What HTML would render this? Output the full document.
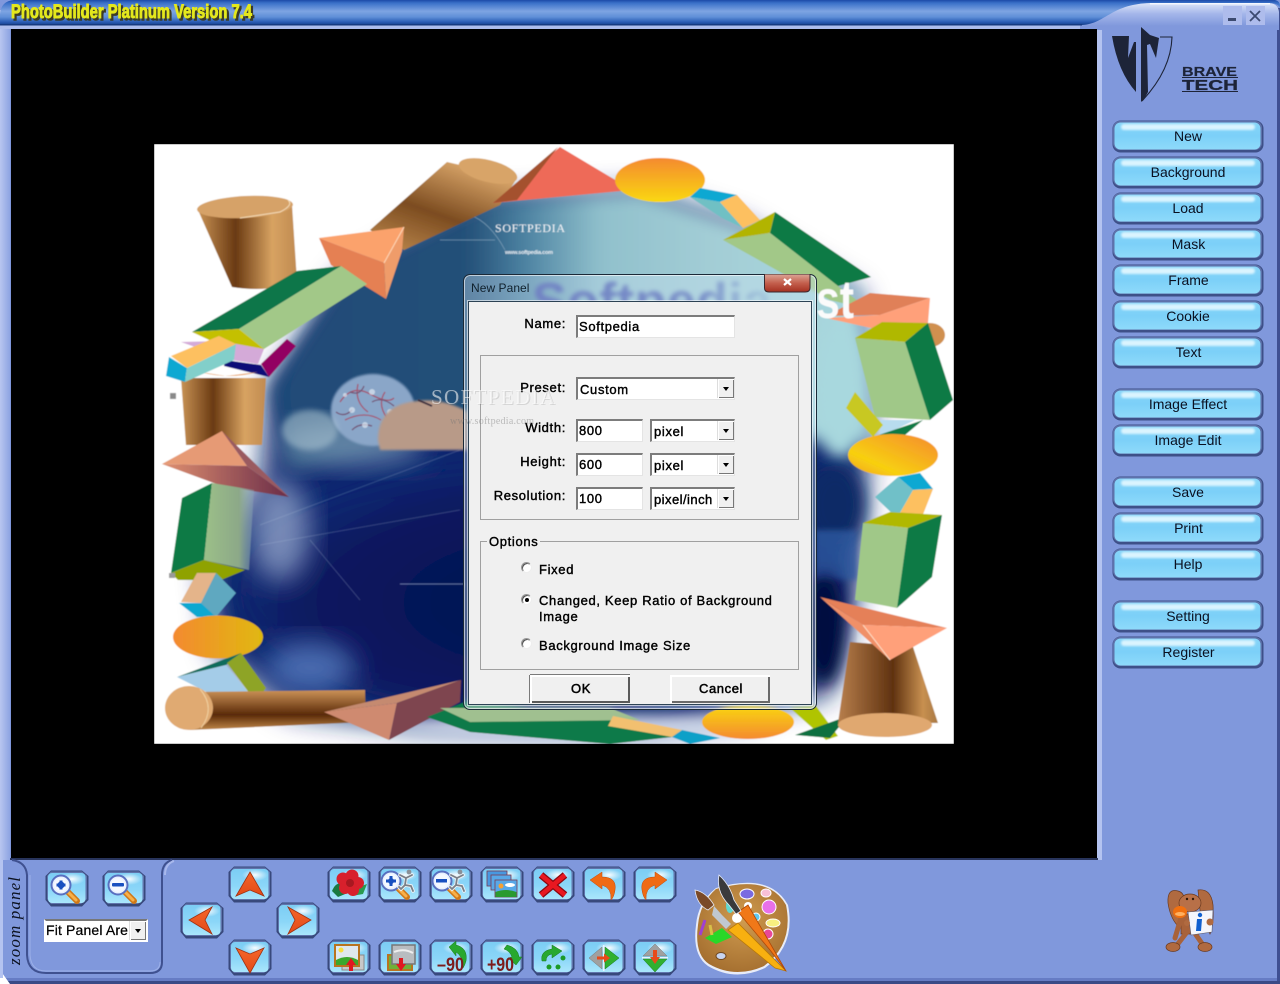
<!DOCTYPE html>
<html><head><meta charset="utf-8"><title>PhotoBuilder Platinum</title>
<style>
html,body{margin:0;padding:0;width:1280px;height:984px;overflow:hidden;background:#8098dc}
svg.page{position:absolute;left:0;top:0}
.glass{position:absolute;left:463px;top:274px;width:352px;height:434px;border:1px solid #1b2a38;border-radius:7px;background:rgba(205,228,244,.36);backdrop-filter:blur(2px);box-shadow:inset 0 0 0 1px rgba(255,255,255,.6)}
.client{position:absolute;left:469px;top:302px;width:342px;height:402px;background:#f0f0f0;box-shadow:0 0 0 1px #2c4254,0 0 0 2px rgba(255,255,255,.6)}
.t{position:absolute;font:13px/16px "Liberation Sans",sans-serif;color:#000;letter-spacing:.66px;-webkit-text-stroke:.4px #000;white-space:nowrap}
.r{text-align:right;width:110px;left:456px}
.i{position:absolute;box-sizing:border-box;background:#fff;border-top:2px solid #7c7c7c;border-left:2px solid #7c7c7c;border-right:1px solid #e4e4e4;border-bottom:1px solid #e4e4e4;font:13px/19px "Liberation Sans",sans-serif;letter-spacing:.66px;-webkit-text-stroke:.4px #000;padding-left:1px;white-space:nowrap;overflow:hidden;color:#000}
.c{padding-left:2px;line-height:21px}
.c b{position:absolute;right:0;top:0;width:16px;height:19px;background:#f0f0f0;border-left:1px solid #fff;border-top:1px solid #fff;box-sizing:border-box;box-shadow:inset -1px -1px 0 #777,-1px 0 0 #ddd}
.c b:after{content:"";position:absolute;left:4px;top:7px;border:3.5px solid transparent;border-top:4px solid #000;border-bottom:0}
.g{position:absolute;box-sizing:border-box;border:1px solid #a0a0a0}
.rd{position:absolute;width:11px;height:11px;border-radius:50%;background:#fff;box-sizing:border-box;border:1px solid #9a9a9a;border-right-color:#eee;border-bottom-color:#eee;box-shadow:inset 1px 1px 0 #555}
.rd i{position:absolute;left:3px;top:3px;width:4px;height:4px;border-radius:50%;background:#000}
.btn{position:absolute;box-sizing:border-box;height:28px;width:100px;top:675px;background:#f0f0f0;border-top:2px solid #fff;border-left:2px solid #fff;box-shadow:inset -2px -2px 0 #6a6a6a;text-align:center;font:13px/23px "Liberation Sans",sans-serif;letter-spacing:.6px;-webkit-text-stroke:.5px #000;color:#000}
</style></head>
<body>
<svg class="page" width="1280" height="984" viewBox="0 0 1280 984" xmlns="http://www.w3.org/2000/svg">
<defs>
<filter id="f05" x="0" y="0" width="100%" height="100%"><feGaussianBlur stdDeviation=".6"/></filter>
<filter id="f1" x="-20%" y="-20%" width="140%" height="140%"><feGaussianBlur stdDeviation="1"/></filter>
<filter id="f3" x="-30%" y="-30%" width="160%" height="160%"><feGaussianBlur stdDeviation="3"/></filter>
<filter id="f8" x="-30%" y="-30%" width="160%" height="160%"><feGaussianBlur stdDeviation="8"/></filter>
<filter id="f14" x="-30%" y="-30%" width="160%" height="160%"><feGaussianBlur stdDeviation="14"/></filter>
<clipPath id="ic"><rect x="154" y="144" width="800" height="600"/></clipPath>
<linearGradient id="tb" x1="0" y1="0" x2="0" y2="1"><stop offset="0" stop-color="#1c4aa8"/><stop offset=".12" stop-color="#3a70c8"/><stop offset=".45" stop-color="#7ea4e2"/><stop offset=".68" stop-color="#5f8fd8"/><stop offset=".88" stop-color="#2a5cb4"/><stop offset="1" stop-color="#16408c"/></linearGradient>
<linearGradient id="rp" x1="0" y1="0" x2="0" y2="1"><stop offset="0" stop-color="#dde5f8"/><stop offset=".4" stop-color="#a4b6ea"/><stop offset=".85" stop-color="#8098dc"/></linearGradient>
<linearGradient id="lb" x1="0" y1="0" x2="1" y2="0"><stop offset="0" stop-color="#b8c6f0"/><stop offset="1" stop-color="#8ea4e2"/></linearGradient>
<linearGradient id="bg" x1="0" y1="0" x2="0" y2="1"><stop offset="0" stop-color="#86d4f8"/><stop offset=".5" stop-color="#7cd0f8"/><stop offset="1" stop-color="#8edafa"/></linearGradient>
<linearGradient id="ibg" x1="0" y1="0" x2="0" y2="1"><stop offset="0" stop-color="#7ccdf4"/><stop offset=".55" stop-color="#8bd6f8"/><stop offset="1" stop-color="#aae6fc"/></linearGradient>
<linearGradient id="cyl" x1="0" y1="0" x2="1" y2="0"><stop offset="0" stop-color="#c99355"/><stop offset=".38" stop-color="#6a3a12"/><stop offset=".75" stop-color="#d8a362"/><stop offset="1" stop-color="#c08a50"/></linearGradient>
<linearGradient id="cyl2" x1="0" y1="0" x2="1" y2="0"><stop offset="0" stop-color="#b87f4c"/><stop offset=".55" stop-color="#5f3210"/><stop offset=".85" stop-color="#c89050"/><stop offset="1" stop-color="#a87842"/></linearGradient>
<linearGradient id="cylt" x1="0" y1="1" x2=".6" y2="0"><stop offset="0" stop-color="#c08c50"/><stop offset=".5" stop-color="#7c4c20"/><stop offset="1" stop-color="#d8a468"/></linearGradient>
<linearGradient id="logg" x1="0" y1="0" x2="0" y2="1"><stop offset="0" stop-color="#cc9358"/><stop offset=".62" stop-color="#5a2a08"/><stop offset="1" stop-color="#c08848"/></linearGradient>
<linearGradient id="ory" x1="0" y1="0" x2="1" y2="0"><stop offset="0" stop-color="#f48a30"/><stop offset="1" stop-color="#e0b810"/></linearGradient>
<linearGradient id="oty" x1="0" y1="0" x2="0" y2="1"><stop offset="0" stop-color="#f48a30"/><stop offset="1" stop-color="#fad810"/></linearGradient>
<linearGradient id="oyl" x1="1" y1="0" x2="0" y2="1"><stop offset="0" stop-color="#f48a30"/><stop offset=".7" stop-color="#f8d010"/><stop offset="1" stop-color="#f0a020"/></linearGradient>
<linearGradient id="top" x1="0" y1="0" x2="1" y2="0"><stop offset="0" stop-color="#1f4a78"/><stop offset=".33" stop-color="#245078"/><stop offset=".42" stop-color="#4a80a0"/><stop offset=".55" stop-color="#90c0cc"/><stop offset=".75" stop-color="#a4ced6"/><stop offset="1" stop-color="#a8d8e0"/></linearGradient>
<linearGradient id="gfade" x1="0" y1="0" x2="1" y2="0"><stop offset="0" stop-color="#9cc088"/><stop offset=".7" stop-color="#8ca888"/><stop offset="1" stop-color="#8ca8b8" stop-opacity=".4"/></linearGradient>
<linearGradient id="prD" x1="0" y1="0" x2="1" y2="0"><stop offset="0" stop-color="#e09070"/><stop offset="1" stop-color="#6a2c48"/></linearGradient>
<linearGradient id="arr" x1="0" y1="0" x2="0" y2="1"><stop offset="0" stop-color="#f5662a"/><stop offset="1" stop-color="#e24a18"/></linearGradient>
<linearGradient id="sof" x1="0" y1="0" x2="1" y2="0"><stop offset="0" stop-color="#3c4aa8"/><stop offset=".7" stop-color="#4a60b0"/><stop offset="1" stop-color="#6a90c0" stop-opacity=".3"/></linearGradient>
<radialGradient id="hl" cx=".5" cy=".5" r=".5"><stop offset="0" stop-color="#fff" stop-opacity=".95"/><stop offset="1" stop-color="#fff" stop-opacity="0"/></radialGradient>
<radialGradient id="nav" cx=".55" cy=".55" r=".62"><stop offset="0" stop-color="#04104e"/><stop offset=".72" stop-color="#081a60"/><stop offset="1" stop-color="#14307e"/></radialGradient>
<radialGradient id="wood" cx=".5" cy=".4" r=".7"><stop offset="0" stop-color="#d09c50"/><stop offset="1" stop-color="#a06a2c"/></radialGradient>
<symbol id="mb" width="152" height="33" viewBox="0 0 152 33">
<rect x=".5" y=".5" width="151" height="32" rx="8" fill="#3e5088"/>
<rect x="1" y="1" width="149" height="29" rx="7" fill="#5e72aa"/>
<rect x="2.5" y="2.5" width="146" height="27" rx="6" fill="url(#bg)"/>
<rect x="9" y="4" width="134" height="6" rx="3" fill="#e4f8ff" opacity=".9" filter="url(#f1)"/>
</symbol>
<symbol id="ib" width="44" height="37" viewBox="0 0 44 37">
<path d="M6 .5H37L43.5 6V30L37 36.5H6L.5 30V6Z" fill="#38497c"/>
<path d="M6 1.5H37L42 6V29L36 34H6L2 29V6Z" fill="#6074ac"/>
<rect x="3" y="3" width="37.5" height="30" rx="4" fill="url(#ibg)"/>
<ellipse cx="27" cy="9" rx="13" ry="6" fill="url(#hl)"/>
</symbol>
<symbol id="mag" width="44" height="37" viewBox="0 0 44 37">
<path d="M22 21L32 31" stroke="#d07818" stroke-width="6" stroke-linecap="round"/><path d="M22 21L31 30" stroke="#f8b048" stroke-width="3" stroke-linecap="round"/>
<circle cx="16" cy="15" r="9.5" fill="#e8f0ff" stroke="#5870c0" stroke-width="2"/><circle cx="16" cy="15" r="7" fill="#f4f8ff"/>
</symbol>
<symbol id="run" width="44" height="37" viewBox="0 0 44 37">
<path d="M22 9L28 12 34 9M28 12L27 19 33 20 35 25M27 19L23 23 21 21" fill="none" stroke="#eef2f6" stroke-width="3.6" stroke-linecap="round"/>
<path d="M22 9L28 12 34 9M28 12L27 19 33 20 35 25M27 19L23 23 21 21" fill="none" stroke="#7a8088" stroke-width="1.8" stroke-linecap="round"/>
<circle cx="31" cy="6" r="2.4" fill="#8a9098"/>
</symbol>
</defs>

<!-- window base -->
<path d="M12 0H1268Q1280 0 1280 12V984H8L0 976V12Q0 0 12 0Z" fill="#8098dc"/>
<rect x="0" y="10" width="10" height="850" fill="url(#lb)"/>
<rect x="0" y="24" width="1100" height="5" fill="#aebdec"/>
<rect x="1097" y="24" width="5" height="836" fill="#b4c3f0"/>
<rect x="1277" y="8" width="3" height="976" fill="#3f5092"/>
<rect x="6" y="981" width="1274" height="3" fill="#3a4a86"/>
<rect x="3" y="978" width="1274" height="3" fill="#667cc4"/>
<path d="M0 970L10 984H0Z" fill="#fff"/>
<rect x="0" y="860" width="3" height="118" fill="#b4c3f0"/>
<!-- right panel head -->
<path d="M1080 25C1105 25 1105 4 1150 3H1268Q1278 3 1279 12V30H1080Z" fill="url(#rp)"/>
<!-- title bar -->
<path d="M0 25V14Q1 1 14 0H1275Q1280 1 1280 6V8Q1278 3 1268 3H1150C1110 4 1105 25 1080 25Z" fill="url(#tb)"/>
<rect x="0" y="24" width="1082" height="1.5" fill="#163a80"/>
<rect x="1150" y="3" width="120" height="1.5" fill="#f4f7ff"/>
<g font-family="Liberation Sans, sans-serif" font-weight="bold" font-size="19">
<text x="13" y="20" textLength="241" lengthAdjust="spacingAndGlyphs" fill="#3c3c28" stroke="#3c3c28" stroke-width="1.4">PhotoBuilder Platinum Version 7.4</text>
<text x="11" y="18" textLength="241" lengthAdjust="spacingAndGlyphs" fill="#e4e81c" stroke="#e4e81c" stroke-width=".9">PhotoBuilder Platinum Version 7.4</text>
</g>
<!-- min / close -->
<rect x="1223" y="6" width="19" height="19" fill="#aebcec"/><rect x="1228" y="18" width="8" height="3" fill="#3c4a70"/>
<rect x="1246" y="6" width="19" height="19" fill="#aebcec"/><path d="M1250 11L1260 21M1260 11L1250 21" stroke="#3c4a70" stroke-width="1.8"/>

<!-- black canvas -->
<rect x="11" y="29" width="1086" height="829" fill="#000"/>
<rect x="10" y="858" width="1088" height="2" fill="#28345c"/>

<!-- picture -->
<g clip-path="url(#ic)"><g filter="url(#f05)">
<rect x="154" y="144" width="800" height="600" fill="#fff"/>
<path d="M205 560L262 480 270 385 345 275 490 200 640 192 740 225 860 295 870 420 855 600 830 695 650 732 420 728 290 712 215 650Z" fill="#10286e" filter="url(#f14)"/>
<path d="M270 390L345 275 490 200 640 192 740 225 860 295 870 440 830 440 600 420 400 440 290 470Z" fill="url(#top)" filter="url(#f8)"/>
<ellipse cx="540" cy="590" rx="300" ry="125" fill="url(#nav)" filter="url(#f14)"/>
<ellipse cx="280" cy="530" rx="30" ry="52" fill="#8a9cc4" opacity=".85" filter="url(#f14)"/>
<ellipse cx="350" cy="445" rx="75" ry="22" fill="#7c9cb8" opacity=".75" filter="url(#f14)"/>
<ellipse cx="310" cy="668" rx="45" ry="26" fill="#4a6cb0" filter="url(#f14)"/>
<ellipse cx="580" cy="728" rx="190" ry="13" fill="#cfd8ea" filter="url(#f8)"/>
<ellipse cx="840" cy="390" rx="26" ry="70" fill="#a8d8de" filter="url(#f8)"/>
<ellipse cx="835" cy="505" rx="30" ry="40" fill="#0c2a66" filter="url(#f8)"/>
<rect x="815" y="530" width="42" height="50" fill="#2f5aa0" opacity=".8" filter="url(#f3)"/>
<ellipse cx="825" cy="630" rx="20" ry="55" fill="#051040" filter="url(#f8)"/>
<path d="M260 525L460 450M260 545L460 510M310 540L360 600" stroke="#b8c8e0" stroke-width="1" opacity=".22" fill="none"/>
<path d="M400 584H465" stroke="#8a9cc8" stroke-width="1" opacity=".6"/>
<!-- paisley ball -->
<ellipse cx="373" cy="410" rx="42" ry="36" fill="#8aa6c8" filter="url(#f1)"/>
<g stroke="#a84860" stroke-width="1.3" fill="none" opacity=".85"><path d="M340 402q12-18 30-8t24 4M345 420q20-10 36 0M358 384q-4 18 10 28M385 392q-8 12 2 26"/><path d="M336 412q8 6 16-2M350 392q10 4 14-6M372 402q10-6 22 4M352 430q8-8 20-4" stroke="#704868"/></g>
<g fill="#dfe8f2" opacity=".7"><circle cx="352" cy="410" r="3"/><circle cx="372" cy="392" r="3"/><circle cx="390" cy="412" r="3"/><circle cx="365" cy="425" r="3"/><circle cx="345" cy="395" r="2"/></g>
<path d="M378 440Q378 408 410 402Q440 396 468 412V450H380Z" fill="#b89a88" filter="url(#f1)"/>
<path d="M418 400L432 406" stroke="#403040" stroke-width="2"/>
<ellipse cx="310" cy="430" rx="28" ry="20" fill="#b6ced8" opacity=".5" filter="url(#f3)"/>
<text x="495" y="232" font-family="Liberation Serif, serif" font-size="12" fill="#f0f4f8" textLength="70">SOFTPEDIA</text>
<text x="505" y="254" font-family="Liberation Sans, sans-serif" font-size="5.5" font-weight="bold" fill="#e8eef4" textLength="48">www.softpedia.com</text>
<path d="M440 240H495M470 215Q490 222 505 250" stroke="#a0bcd0" stroke-width=".7" fill="none" opacity=".6"/>
<text x="532" y="319" font-family="Liberation Sans, sans-serif" font-size="52" font-weight="bold" fill="url(#sof)" textLength="240">Softpedia</text>
<!-- TL cylinder -->
<path d="M198 210L292 205 297 281Q270 293 232 287Z" fill="url(#cyl)"/>
<ellipse cx="245" cy="207" rx="48" ry="11" fill="#d6a268" transform="rotate(-3 245 207)"/>
<path d="M288 200Q294 205 280 212L240 218" stroke="#f4dcb8" fill="none" stroke-width="1"/>
<!-- upper log -->
<path d="M370 230L447 162 517 178 500 205 404 250Z" fill="url(#cylt)"/>
<ellipse cx="488" cy="171" rx="30" ry="11" fill="#d8a468" transform="rotate(14 488 171)"/>
<!-- red triangle -->
<path d="M493 203L560 147 632 190Z" fill="#ee6a58"/><path d="M493 203L558 147 517 200Z" fill="#a4512e"/>
<!-- pyramid TL -->
<path d="M319 238L404 227 384 263Z" fill="#fba26c"/><path d="M319 238L384 263 386 299 331 265Z" fill="#e58052"/><path d="M404 227L384 263 386 299 402 251Z" fill="#ef9c6a"/>
<path d="M404 227L384 263" stroke="#ffd8b8" stroke-width="1"/>
<!-- green bar TL -->
<path d="M192 332L297 271 341 266 239 329Z" fill="#08764a"/><path d="M239 329L341 266 367 284 264 349Z" fill="#a2c888"/><path d="M192 332L239 329 264 349 222 346Z" fill="#c4c000"/>
<!-- pink & maroon -->
<path d="M181 342L220 341 264 349 258 364 232 360Z" fill="#d4aad8"/><path d="M261 364L287 339 296 346 269 377Z" fill="#920062"/><path d="M225 360L261 365 269 377 224 366Z" fill="#0a0a78"/>
<!-- cylinder 2 -->
<path d="M181 378H266L262 445 186 445Z" fill="url(#cyl)"/><path d="M200 372Q230 380 258 372L226 376Z" fill="#e8a060"/>
<!-- small box -->
<path d="M169 357L187 368 185 382 166 376Z" fill="#10a8d2"/><path d="M187 368L236 344 234 360 185 382Z" fill="#82cfca"/><path d="M171 356L219 336 236 344 187 368Z" fill="#fdc060"/>
<rect x="170" y="393" width="6" height="6" fill="#8a8a8a"/>
<!-- salmon pyramid L -->
<path d="M162 464L222 431 247 466Z" fill="#e69a74"/><path d="M162 464L247 466 289 497 222 486Z" fill="url(#prD)"/><path d="M222 431L247 466 289 497Z" fill="#9a5a60"/>
<!-- box L -->
<path d="M182 498L212 483 204 560 171 573Z" fill="#087a44"/><path d="M212 483L254 490 249 570 204 560Z" fill="url(#gfade)"/><path d="M171 573L204 560 245 570 221 580 178 580Z" fill="#8fa200"/>
<rect x="169" y="573" width="6" height="5" fill="#999"/>
<path d="M181 602L197 573 216 573 201 603Z" fill="#e4b48a"/><path d="M216 573L236 593 216 617 201 603Z" fill="#5fa8c0"/><path d="M179 603L201 603 216 617 197 617Z" fill="#10a8d0"/>
<ellipse cx="218" cy="637" rx="45" ry="21.5" fill="url(#ory)"/>
<path d="M177 677L241 653 226 665Z" fill="#0c6c5c"/><path d="M177 677L226 665 256 702 232 705Z" fill="#a4cce8"/><path d="M227 663L241 653 266 688 256 702Z" fill="#8ea428"/>
<!-- log bottom -->
<path d="M190 692L365 690 366 722 190 730Z" fill="url(#logg)"/>
<ellipse cx="189" cy="708" rx="24" ry="22" fill="#e0aa72"/>
<path d="M200 689Q216 708 201 728" stroke="#f0d0a0" fill="none" stroke-width="1"/>
<!-- bottom pyramid -->
<path d="M324 712L461 680 397 703Z" fill="#c58a70"/><path d="M324 712L397 703 389 740Z" fill="#cf8a70"/><path d="M397 703L461 680 460 702 389 740Z" fill="#7e4450"/>
<path d="M427 717L470 700 620 720 690 735 610 744 470 732Z" fill="#0a7a48"/>
<path d="M440 708H610L640 720 470 722Z" fill="#a0c090"/>
<path d="M613 716L682 730 672 737 608 726Z" fill="#f2c070"/>
<path d="M682 730L720 738 690 744 672 737Z" fill="#10a0c8"/>
<ellipse cx="748" cy="722" rx="46" ry="17" fill="url(#oty)" transform="rotate(180 748 722)"/>
<path d="M790 708L816 706 838 736 826 740Z" fill="#b0c400"/><path d="M795 735L848 716 830 738Z" fill="#0a7040"/>
<!-- top small box -->
<ellipse cx="660" cy="180" rx="45" ry="22" fill="url(#oty)"/>
<path d="M700 188L737 195 720 202 690 197Z" fill="#10a8d2"/><path d="M690 197L720 202 743 228 722 218Z" fill="#70c0c4"/><path d="M720 202L737 195 760 220 743 228Z" fill="#fdc060"/>
<!-- right green bar -->
<path d="M723 240L775 212 770 233Z" fill="#b2b400"/><path d="M775 212L871 277 838 286 770 233Z" fill="#087a44"/><path d="M723 240L770 233 838 286 870 310 830 300Z" fill="#a2c888"/>
<!-- right shapes -->
<ellipse cx="930" cy="335" rx="15" ry="12" fill="#d09050"/>
<path d="M826 316L870 293 930 298 880 315Z" fill="#e08058"/><path d="M930 298L928 323 880 330 826 318 880 315Z" fill="#ffa07a"/>
<text x="816" y="318" font-family="Liberation Sans, sans-serif" font-size="54" font-weight="bold" fill="#fbfbfb" textLength="38" lengthAdjust="spacingAndGlyphs">st</text>
<path d="M855 338L905 342 930 420 875 417Z" fill="#a0c888"/><path d="M855 338L882 322 928 323 905 342Z" fill="#b0b800"/><path d="M905 342L928 323 953 400 930 420Z" fill="#087a44"/>
<path d="M880 420L915 420 880 437Z" fill="#b8dcee"/>
<path d="M855 392L883 425 873 437 846 408Z" fill="#c8c820"/><path d="M873 437L923 420 905 435Z" fill="#0a7a44"/>
<ellipse cx="893" cy="455" rx="45" ry="21" fill="url(#oyl)"/>
<path d="M898 477L920 473 933 489 913 490Z" fill="#10a8d2"/><path d="M913 490L933 489 922 517 897 518Z" fill="#fdc060"/><path d="M875 497L898 477 913 490 897 518Z" fill="#70c0c8"/>
<path d="M863 523L908 528 897 608 855 600Z" fill="#a0c888"/><path d="M863 523L890 512 942 515 908 528Z" fill="#b0b800"/><path d="M908 528L942 515 932 577 897 608Z" fill="#087a44"/>
<path d="M850 642L913 647 938 723 838 723Z" fill="url(#cyl2)"/>
<ellipse cx="885" cy="725" rx="47" ry="12" fill="#e0a870"/>
<path d="M820 597L947 628 863 625Z" fill="#e58058"/><path d="M863 625L947 628 890 660Z" fill="#ffa07a"/><path d="M820 597L863 625 890 660Z" fill="#f09068"/>
<path d="M863 625L890 660" stroke="#ffe0c8" stroke-width="1"/>
</g></g>

<!-- logo -->
<g fill="#1d2438">
<path d="M1112 36L1129 36 1128 58 1134 42 1136 42V92Q1118 72 1112 36Z"/>
<path d="M1141 27V102L1144 99 1148 92 1147 45 1150 44 1156 58 1159 38 1150 35Z"/>
</g>
<path d="M1160 37H1172Q1171 70 1142 101" fill="none" stroke="#1d2438" stroke-width="1.1"/>
<g font-family="Liberation Sans, sans-serif" font-weight="bold" fill="#1d2438">
<text x="1182" y="76" font-size="12.500" textLength="55" lengthAdjust="spacingAndGlyphs" stroke="#1d2438" stroke-width=".2">BRAVE</text>
<text x="1182" y="90" font-size="14.500" textLength="56" lengthAdjust="spacingAndGlyphs" stroke="#1d2438" stroke-width=".3">TECH</text>
</g>
<rect x="1182" y="77" width="56" height="1" fill="#1d2438"/><rect x="1182" y="91" width="56" height="1" fill="#1d2438"/>

<!-- right buttons -->
<use href="#mb" x="1112" y="120"/><use href="#mb" x="1112" y="156"/><use href="#mb" x="1112" y="192"/><use href="#mb" x="1112" y="228"/><use href="#mb" x="1112" y="264"/><use href="#mb" x="1112" y="300"/><use href="#mb" x="1112" y="336"/>
<use href="#mb" x="1112" y="388"/><use href="#mb" x="1112" y="424"/>
<use href="#mb" x="1112" y="476"/><use href="#mb" x="1112" y="512"/><use href="#mb" x="1112" y="548"/>
<use href="#mb" x="1112" y="600"/><use href="#mb" x="1112" y="636"/>
<g font-family="Liberation Sans, sans-serif" font-size="14" fill="#0a1020" text-anchor="middle">
<text x="1188" y="141">New</text><text x="1188" y="177">Background</text><text x="1188" y="213">Load</text><text x="1188.500" y="249">Mask</text><text x="1188.500" y="285">Frame</text><text x="1188" y="321">Cookie</text><text x="1188.500" y="357">Text</text>
<text x="1188" y="409">Image Effect</text><text x="1188" y="445">Image Edit</text>
<text x="1188" y="497">Save</text><text x="1188.500" y="533">Print</text><text x="1188" y="569">Help</text>
<text x="1188" y="621">Setting</text><text x="1188.500" y="657">Register</text>
</g>

<!-- zoom panel frame -->
<path d="M12 860Q26 862 27 875V955Q28 973 46 973H150Q162 973 162 962V875Q162 863 172 860" fill="none" stroke="#3f5190" stroke-width="2"/>
<path d="M165 875Q165 864 174 861" fill="none" stroke="#a8b8ec" stroke-width="2"/>
<path d="M30 875V955Q31 971 46 971H150Q160 971 160 962" fill="none" stroke="#9cb0e8" stroke-width="1"/>
<text transform="translate(20 965) rotate(-90)" font-family="Liberation Serif, serif" font-style="italic" font-size="17" letter-spacing="1" fill="#0c1220" textLength="89">zoom panel</text>

<!-- zoom btns -->
<use href="#ib" x="45" y="870"/><use href="#mag" x="45" y="870"/><circle cx="61" cy="885" r="3.500" fill="#1850c0"/><path d="M56.500 885H65.500M61 880.500V889.500" stroke="#1850c0" stroke-width="3"/>
<use href="#ib" x="102" y="870"/><use href="#mag" x="102" y="870"/><rect x="112" y="883" width="12" height="3.500" rx="1" fill="#1850c0"/>

<!-- arrows -->
<use href="#ib" x="228" y="866"/><path d="M250 872L264 896 250 890 236 896Z" fill="url(#arr)" stroke="#a03010" stroke-width=".8"/>
<use href="#ib" x="228" y="939"/><path d="M236 948L250 954 264 948 250 973Z" fill="url(#arr)" stroke="#a03010" stroke-width=".8"/>
<use href="#ib" x="180" y="902"/><path d="M189 920L212 907 205 920 212 934Z" fill="url(#arr)" stroke="#a03010" stroke-width=".8"/>
<use href="#ib" x="276" y="902"/><path d="M288 907L311 920 288 934 295 920Z" fill="url(#arr)" stroke="#a03010" stroke-width=".8"/>

<!-- row 1 -->
<use href="#ib" x="327" y="866"/>
<path d="M332 891Q336 881 344 884L350 892 338 897Z" fill="#1a7a40"/><path d="M356 888L367 884 363 894 352 896Z" fill="#2a9a50"/>
<g fill="#d8202c"><circle cx="343" cy="879" r="6.500"/><circle cx="352" cy="876" r="6.500"/><circle cx="358" cy="883" r="6"/><circle cx="353" cy="890" r="6"/><circle cx="345" cy="888" r="6"/></g><circle cx="350" cy="883" r="4" fill="#a81820"/>
<use href="#ib" x="378" y="866"/><use href="#mag" x="375" y="866"/><circle cx="391" cy="881" r="3" fill="#1850c0"/><path d="M386 881H396M391 876V886" stroke="#1850c0" stroke-width="3"/><use href="#run" x="378" y="866"/>
<use href="#ib" x="429" y="866"/><use href="#mag" x="426" y="866"/><rect x="436" y="879" width="11" height="3.500" fill="#1850c0"/><use href="#run" x="429" y="866"/>
<use href="#ib" x="480" y="866"/>
<g stroke="#7a3a50" stroke-width=".8"><rect x="487" y="871" width="20" height="15" fill="#4898e0"/><rect x="491" y="875" width="20" height="15" fill="#58a8e8"/><rect x="495" y="880" width="22" height="17" fill="#58a8e8"/></g>
<circle cx="501" cy="886" r="2.500" fill="#f8a030"/><path d="M495.500 897V892Q506 888 516.500 892V897Z" fill="#2a9a30"/><ellipse cx="510" cy="885" rx="5" ry="2" fill="#fff"/>
<use href="#ib" x="531" y="866"/><path d="M541 875L565 895M565 875L541 895" stroke="#8c0810" stroke-width="7"/><path d="M541 875L565 895M565 875L541 895" stroke="#e81820" stroke-width="4.500"/>
<use href="#ib" x="582" y="866"/><path d="M590 880L602 872 602 877Q617 877 615 890 614 897 611 900 612 888 602 885V889Z" fill="#f06a14" stroke="#c04808" stroke-width=".5"/>
<use href="#ib" x="633" y="866"/><path d="M667 880L655 872 655 877Q640 877 642 890 643 897 646 900 645 888 655 885V889Z" fill="#f06a14" stroke="#c04808" stroke-width=".5"/>

<!-- row 2 -->
<use href="#ib" x="327" y="939"/>
<rect x="342" y="955" width="22" height="15" fill="#c8c8c8" stroke="#888"/>
<rect x="335" y="945" width="24" height="21" fill="#dfe8ef" stroke="#b87420" stroke-width="2"/><path d="M336 960Q347 954 358 960V965H336Z" fill="#3aa82c"/><circle cx="341" cy="950" r="2.500" fill="#f8e040"/>
<path d="M351 958L356 965H353V971H349V965H346Z" fill="#e01820"/>
<use href="#ib" x="378" y="939"/>
<rect x="388" y="955" width="24" height="15" fill="#70b038" stroke="#b87420" stroke-width="2"/>
<rect x="392" y="945" width="23" height="19" fill="#b8bcc0" stroke="#777" stroke-width="1.500"/><path d="M394 952Q404 948 413 953" stroke="#eee" stroke-width="2" fill="none"/>
<path d="M401 971L396 964H399V958H403V964H406Z" fill="#e01820"/>
<use href="#ib" x="429" y="939"/>
<path d="M449 947L456 941 456 945Q468 948 466 961 465 965 463 968 463 956 456 952V956Z" fill="#28a830" stroke="#187820" stroke-width=".5"/>
<text x="437" y="971" font-family="Liberation Sans, sans-serif" font-size="19" font-weight="bold" fill="#7c1c1c" textLength="27" lengthAdjust="spacingAndGlyphs">–90</text>
<use href="#ib" x="480" y="939"/>
<path d="M507 945Q518 948 519 957L522 957 516 965 508 958 512 957Q510 951 504 949Z" fill="#28a830" stroke="#187820" stroke-width=".5"/>
<text x="487" y="971" font-family="Liberation Sans, sans-serif" font-size="19" font-weight="bold" fill="#7c1c1c" textLength="27" lengthAdjust="spacingAndGlyphs">+90</text>
<use href="#ib" x="531" y="939"/>
<path d="M542 961Q540 951 552 949V945L562 951 552 958V954Q546 955 546 961Z" fill="#28a830" stroke="#187820" stroke-width=".5"/>
<circle cx="549" cy="967" r="2.500" fill="#1c9a28"/><circle cx="558" cy="967" r="2.500" fill="#1c9a28"/><circle cx="563" cy="958" r="2.500" fill="#1c9a28"/>
<use href="#ib" x="582" y="939"/>
<path d="M602 947V969L589 958Z" fill="#a0a0a0" stroke="#777" stroke-width=".5"/><path d="M605 947V969L619 958Z" fill="#30b030" stroke="#187820" stroke-width=".5"/><rect x="603" y="945" width="1.500" height="26" fill="#e8f4ff"/>
<path d="M597 956.500H604V953.500L610 958 604 962.500V959.500H597Z" fill="#e84a18"/>
<use href="#ib" x="633" y="939"/>
<path d="M643 956L655 944 667 956Z" fill="#a0a0a0" stroke="#777" stroke-width=".5"/><path d="M643 959L655 972 667 959Z" fill="#30b030" stroke="#187820" stroke-width=".5"/><rect x="642" y="957" width="26" height="1.500" fill="#e8f4ff"/>
<path d="M653 950V957H650L655 964 660 957H657V950Z" fill="#e84a18"/>

<!-- palette -->
<path d="M716 888Q770 872 788 905Q796 945 765 968Q735 982 708 966Q692 955 696 925Q698 902 716 888Z" fill="#e8ecf8"/>
<path d="M716 889Q769 874 786 905Q794 944 764 966Q735 979 709 964Q694 954 698 925Q700 903 716 889Z" fill="url(#wood)"/>
<ellipse cx="721" cy="956" rx="5" ry="3.500" fill="#c8d4f0" stroke="#704820"/>
<ellipse cx="747" cy="894" rx="7" ry="5" fill="#7a6ae0" stroke="#fff"/><ellipse cx="766" cy="893" rx="5" ry="4" fill="#f8c0d8" stroke="#fff"/>
<circle cx="769" cy="907" r="7" fill="#e870e8" stroke="#fff"/><ellipse cx="773" cy="923" rx="7" ry="4" fill="#f8f080" stroke="#fff"/><circle cx="768" cy="934" r="5" fill="#e84898" stroke="#fff"/><circle cx="756" cy="917" r="4" fill="#60c8f0" stroke="#fff"/><circle cx="748" cy="906" r="4" fill="#fff"/><circle cx="737" cy="918" r="5" fill="#fff"/>
<ellipse cx="730" cy="906" rx="4" ry="7" fill="#60d8d0"/>
<path d="M705 938L722 928 732 937 716 944Z" fill="#28d828"/><path d="M700 935L705 920" stroke="#a040d0" stroke-width="3"/><path d="M710 925L712 935" stroke="#d8c048" stroke-width="3"/>
<path d="M738 923L786 971 775 968 728 930Z" fill="#f8b010" stroke="#b87808" stroke-width=".8"/>
<path d="M748 905L786 971 770 950 738 912Z" fill="#f07818" stroke="#b04808" stroke-width=".8"/>
<path d="M714 906L722 915 731 924 726 929 712 915Z" fill="#c0c8d0"/>
<path d="M695 890Q706 892 714 905L708 910Q697 905 695 890Z" fill="#7a4a28" stroke="#e8ecf8" stroke-width=".8"/>
<path d="M719 875Q730 885 734 900L741 911 736 914 729 905Q716 892 719 875Z" fill="#3a3a3c" stroke="#e8ecf8" stroke-width=".8"/>

<!-- rabbit -->
<g stroke="#6a3a20" stroke-width=".7">
<path d="M1178 891Q1167 888 1168 903 1170 917 1177 925L1184 905Q1186 893 1178 891Z" fill="#b06a40"/>
<path d="M1198 890Q1211 888 1213 905 1214 925 1210 934L1200 910Z" fill="#b06a40"/>
<ellipse cx="1190" cy="903" rx="11" ry="9" fill="#b87048"/>
</g>
<path d="M1181 914H1199V934H1181Z" fill="#a8623a" stroke="#6a3a20" stroke-width=".7"/>
<path d="M1187 932L1177 945M1194 932L1203 945M1181 918L1175 938" stroke="#a8623a" stroke-width="5" stroke-linecap="round" fill="none"/>
<ellipse cx="1173" cy="947" rx="7" ry="4.500" fill="#b06a40" stroke="#6a3a20" stroke-width=".7"/><ellipse cx="1205" cy="947" rx="7" ry="4.500" fill="#b06a40" stroke="#6a3a20" stroke-width=".7"/>
<ellipse cx="1180" cy="912" rx="7" ry="6" fill="#f07010"/><ellipse cx="1180" cy="914" rx="5" ry="2" fill="#ffb060"/>
<circle cx="1187" cy="899" r="1.200" fill="#301808"/><circle cx="1193" cy="899" r="1.200" fill="#301808"/>
<path d="M1188 912L1213 910 1212 932 1191 935Z" fill="#f4f6fc" stroke="#5a5a70" stroke-width=".6"/>
<circle cx="1200" cy="915" r="2.200" fill="#1060d0"/><path d="M1197 919H1202L1201 931H1196Z" fill="#1060d0"/>
<circle cx="1187" cy="923" r="3" fill="#b06a40"/><circle cx="1210" cy="922" r="3.500" fill="#b06a40"/>
</svg>

<!-- Fit panel combo -->
<div class="i c" style="left:44px;top:919px;width:104px;height:23px;border:2px solid #fff;border-top-color:#777;padding-left:0;font-size:14px;line-height:19px;letter-spacing:.15px;-webkit-text-stroke:.25px #000">Fit Panel Are<b style="right:0;top:0;height:19px"></b></div>

<!-- dialog -->
<div class="glass"></div>
<div class="t" style="left:471px;top:280px;font-size:12px;letter-spacing:.05px;-webkit-text-stroke:0;color:#10202c">New Panel</div>
<svg style="position:absolute;left:764px;top:274px" width="47" height="20" viewBox="0 0 47 20"><defs><linearGradient id="cl" x1="0" y1="0" x2="0" y2="1"><stop offset="0" stop-color="#dca698"/><stop offset=".5" stop-color="#c4604e"/><stop offset="1" stop-color="#a43020"/></linearGradient></defs><path d="M.5 0V14Q.5 18 5 18H41Q46 18 46 14V0Z" fill="url(#cl)" stroke="#3a2a30"/><path d="M20 5L27 11M27 5L20 11" stroke="#fff" stroke-width="2.200"/></svg>
<div class="client"></div>

<div class="t r" style="top:316px">Name:</div>
<div class="i" style="left:576px;top:315px;width:159px;height:23px">Softpedia</div>

<div class="g" style="left:480px;top:355px;width:319px;height:165px"></div>
<div class="t r" style="top:380px">Preset:</div>
<div class="i c" style="left:576px;top:377px;width:159px;height:23px">Custom<b></b></div>
<div class="t r" style="top:420px">Width:</div>
<div class="i" style="left:576px;top:419px;width:67px;height:23px">800</div>
<div class="i c" style="left:650px;top:419px;width:85px;height:23px">pixel<b></b></div>
<div class="t r" style="top:454px">Height:</div>
<div class="i" style="left:576px;top:453px;width:67px;height:23px">600</div>
<div class="i c" style="left:650px;top:453px;width:85px;height:23px">pixel<b></b></div>
<div class="t r" style="top:488px">Resolution:</div>
<div class="i" style="left:576px;top:487px;width:67px;height:23px">100</div>
<div class="i c" style="left:650px;top:487px;width:85px;height:23px;letter-spacing:.45px">pixel/inch<b></b></div>

<div class="g" style="left:480px;top:541px;width:319px;height:129px"></div>
<div class="t" style="left:487px;top:534px;background:#f0f0f0;padding:0 2px">Options</div>
<div class="rd" style="left:521px;top:562px"></div>
<div class="t" style="left:539px;top:562px">Fixed</div>
<div class="rd" style="left:521px;top:594px"><i></i></div>
<div class="t" style="left:539px;top:593px">Changed, Keep Ratio of Background</div>
<div class="t" style="left:539px;top:609px">Image</div>
<div class="rd" style="left:521px;top:638px"></div>
<div class="t" style="left:539px;top:638px">Background Image Size</div>
<div class="btn" style="left:530px;box-shadow:inset -2px -2px 0 #5a5a5a,0 -1px 0 #7a7a7a,-1px 0 0 #7a7a7a">OK</div>
<div class="btn" style="left:670px">Cancel</div>

<!-- watermark drawn over everything -->
<svg style="position:absolute;left:0;top:0;pointer-events:none" width="1280" height="984" viewBox="0 0 1280 984">
<text x="432" y="405" font-family="Liberation Serif, serif" font-size="21" fill="#777" opacity=".22" textLength="124">SOFTPEDIA</text>
<text x="431" y="404" font-family="Liberation Serif, serif" font-size="21" fill="#fff" opacity=".55" textLength="124">SOFTPEDIA</text>
<text x="450" y="424" font-family="Liberation Serif, serif" font-size="10" fill="#777" opacity=".45" textLength="84">www.softpedia.com</text>
</svg>
</body></html>
